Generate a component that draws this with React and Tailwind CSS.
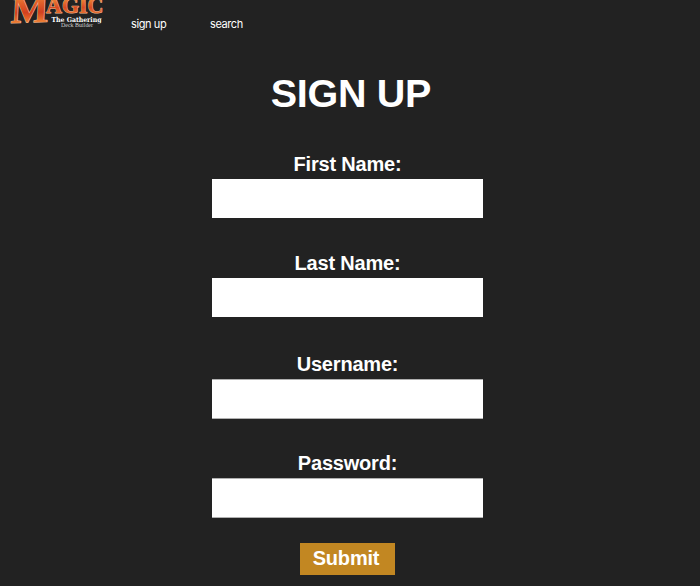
import React from "react";

function Logo() {
  return (
    <svg className="block h-[34px] w-[110px] shrink-0" viewBox="0 0 110 34" role="img" aria-label="Magic The Gathering Deck Builder">
      <defs>
        <linearGradient id="flame" gradientUnits="userSpaceOnUse" x1="0" y1="-30" x2="0" y2="1">
          <stop offset="0" stopColor="#f0943e" />
          <stop offset="0.35" stopColor="#e2602a" />
          <stop offset="0.65" stopColor="#d2401f" />
          <stop offset="0.85" stopColor="#e4652a" />
          <stop offset="1" stopColor="#f08a3a" />
        </linearGradient>
        <linearGradient id="ember" gradientUnits="userSpaceOnUse" x1="0" y1="-2" x2="0" y2="14">
          <stop offset="0" stopColor="#f08a38" />
          <stop offset="0.6" stopColor="#d94a22" />
          <stop offset="1" stopColor="#e87532" />
        </linearGradient>
      </defs>
      <g fontFamily="'Liberation Serif', serif" fontWeight="700" strokeLinejoin="round" paintOrder="stroke">
        <text transform="translate(10.5 23) rotate(-2) skewX(-5)" fontSize="38" fill="url(#flame)" stroke="#f0b590" strokeWidth="1.2" textLength="37.5" lengthAdjust="spacingAndGlyphs">M</text>
        <text x="46" y="13" fontSize="23" fill="url(#ember)" stroke="#f0b590" strokeWidth="1" textLength="57.5" lengthAdjust="spacingAndGlyphs">AGIC</text>
      </g>
      <text x="51.5" y="22" fontFamily="'DejaVu Serif', serif" fontWeight="700" fontSize="6.8" fill="#fff" stroke="#222222" strokeWidth="1.2" paintOrder="stroke" textLength="50" lengthAdjust="spacingAndGlyphs">The Gathering</text>
      <text x="61" y="27.4" fontFamily="'Liberation Serif', serif" fontSize="6.4" fill="#d0d0d0" textLength="32" lengthAdjust="spacingAndGlyphs">Deck Builder</text>
    </svg>
  );
}

function Field({ label, name, type = "text", className = "", inputClass = "h-[39px]" }) {
  return (
    <div className={`flex flex-col items-center ${className}`}>
      <label htmlFor={name} className="text-[20px] leading-6 font-bold tracking-[-0.2px]">{label}</label>
      <input id={name} type={type} className={`block w-[271px] bg-white px-2 text-black outline-none ${inputClass}`} />
    </div>
  );
}

export default function App() {
  return (
    <div className="h-[586px] overflow-hidden bg-[#222222] font-['Liberation_Sans',sans-serif] text-white">
      <header className="flex h-[70px] items-start">
        <Logo />
        <nav className="flex pt-4 pl-[21px] font-['Inter',sans-serif] text-[11px] leading-4 tracking-[-0.4px]">
          <a className="w-[79px]">sign up</a>
          <a>search</a>
        </nav>
      </header>
      <main>
        <h1 className="pl-[2px] text-center text-[39.5px] leading-[46px] font-bold tracking-[-0.3px]">SIGN UP</h1>
        <form className="flex flex-col items-center pt-9 pr-[5px]">
          <Field label="First Name:" name="first" inputClass="mt-[3px] h-[39px]" />
          <Field label="Last Name:" name="last" className="mt-[33px]" inputClass="mt-[3px] h-[39px]" />
          <Field label="Username:" name="user" className="mt-[35px]" inputClass="mt-[3px] h-10 border-y border-[#b0b0b0]" />
          <Field label="Password:" name="pass" type="password" className="mt-8" inputClass="mt-[3px] h-10 border-y border-[#b0b0b0]" />
          <button type="button" className="mt-[25px] h-8 w-[95px] bg-[#c28722] pr-[3px] pb-[2px] text-[20px] leading-[30px] font-bold tracking-[-0.2px]">Submit</button>
        </form>
      </main>
    </div>
  );
}
